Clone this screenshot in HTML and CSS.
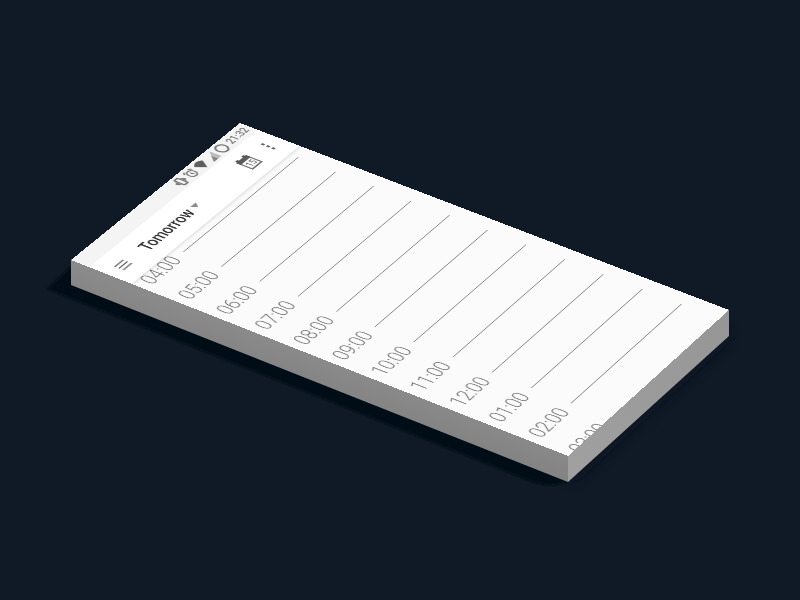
FILE: index.html
```html
<!DOCTYPE html>
<html lang="en">
<head>
<meta charset="utf-8">
<meta name="viewport" content="width=device-width, initial-scale=1">
<title>Day schedule</title>
<link rel="stylesheet" href="styles.css">
</head>
<body>
<div class="device">
  <svg class="slab" viewBox="71 121 658 358" aria-hidden="true">
    <defs>
      <linearGradient id="front" gradientUnits="userSpaceOnUse" x1="310" y1="355" x2="300" y2="382">
        <stop offset="0" stop-color="#8a8a8a"/><stop offset="1" stop-color="#838383"/>
      </linearGradient>
      <linearGradient id="side" gradientUnits="userSpaceOnUse" x1="568" y1="470" x2="729" y2="322">
        <stop offset="0" stop-color="#a0a0a0"/><stop offset="1" stop-color="#969696"/>
      </linearGradient>
      <filter id="soft" x="-10%" y="-10%" width="120%" height="120%"><feGaussianBlur stdDeviation="1"/></filter>
      <filter id="softer" x="-20%" y="-20%" width="140%" height="140%"><feGaussianBlur stdDeviation="6"/></filter>
    </defs>
    <path d="M568 470L729 322V342L572 486Z" fill="#08111c" opacity=".5" filter="url(#softer)"/>
    <path d="M71 266L47 289L535 483Q552 488 568 481Z" fill="#050b14" filter="url(#soft)"/>
    <path d="M71 259L568 455V482L71 285Z" fill="url(#front)"/>
    <path d="M568 455L729 309V336L568 482Z" fill="url(#side)"/>
  </svg>

  <div class="screen">
    <header class="header">
      <div class="status">
        <svg class="status-icon" viewBox="0 0 18 18"><rect x="5.500" y="2" width="7" height="14" rx="1" fill="none" stroke="currentColor" stroke-width="2.400"/><path d="M3 5v8M15 5v8M1 7v4M17 7v4" stroke="currentColor" stroke-width="1.800"/></svg>
        <svg class="status-icon" viewBox="0 0 18 18" fill="none" stroke="currentColor" stroke-width="2"><circle cx="9" cy="10" r="6"/><path d="M9 7v3.500l2.500 1.500M1 5l4-3.500M17 5l-4-3.500"/></svg>
        <svg class="status-icon" viewBox="0 0 18 18"><path d="M0 5Q9-3 18 5L9 17Z" fill="#5e5e5e"/></svg>
        <svg class="status-icon" viewBox="0 0 18 18"><path d="M1 17L17 1V17Z" fill="#bbb"/><path d="M1 17L10 8V17Z" fill="#858585"/></svg>
        <svg class="status-icon" viewBox="0 0 18 18"><circle cx="9" cy="9" r="7.500" fill="none" stroke="currentColor" stroke-width="2.400"/></svg>
        <time class="clock">21:32</time>
      </div>
      <div class="toolbar">
        <button class="icon-button" aria-label="Menu"><svg class="menu-icon" viewBox="0 0 20 20"><path d="M1 4.500H19M1 10H19M1 15.500H19" stroke="currentColor" stroke-width="1.800"/></svg></button>
        <button class="title">Tomorrow<svg class="caret" viewBox="0 0 10 6"><path d="M0 0H10L5 6Z" fill="#888"/></svg></button>
        <button class="icon-button" aria-label="Today"><svg class="calendar-icon" viewBox="0 0 24 24"><path d="M3 4H21V22H3Z" fill="none" stroke="currentColor" stroke-width="2"/><path d="M2 2H22V8H2ZM4 0H8V4H4ZM16 0H20V4H16Z" fill="#5a5a5a"/><text x="12" y="19" text-anchor="middle">15</text></svg></button>
        <button class="icon-button" aria-label="More options"><svg class="more-icon" viewBox="0 0 20 20"><circle cx="10" cy="3" r="2.200"/><circle cx="10" cy="10" r="2.200"/><circle cx="10" cy="17" r="2.200"/></svg></button>
      </div>
    </header>
    <main class="schedule">
      <ol class="hours">
        <li class="hour"><time>04:00</time></li>
        <li class="hour"><time>05:00</time></li>
        <li class="hour"><time>06:00</time></li>
        <li class="hour"><time>07:00</time></li>
        <li class="hour"><time>08:00</time></li>
        <li class="hour"><time>09:00</time></li>
        <li class="hour"><time>10:00</time></li>
        <li class="hour"><time>11:00</time></li>
        <li class="hour"><time>12:00</time></li>
        <li class="hour"><time>01:00</time></li>
        <li class="hour"><time>02:00</time></li>
        <li class="hour"><time>03:00</time></li>
      </ol>
    </main>
  </div>
</div>
</body>
</html>
```
FILE: styles.css
```css
* { box-sizing: border-box; }

body {
  margin: 0;
  min-height: 100vh;
  display: grid;
  place-items: center;
  overflow: hidden;
  background: #0f1a26;
  font-family: Roboto, "Liberation Sans", sans-serif;
}

.device {
  position: relative;
  width: 658px;
  height: 358px;
}

.slab {
  display: block;
  width: 100%;
  height: 100%;
  overflow: visible;
}

/* The flat 360 x 640 phone screen, projected onto the top of the slab. */
.screen {
  position: absolute;
  top: 0;
  left: 0;
  width: 360px;
  height: 640px;
  display: flex;
  flex-direction: column;
  overflow: hidden;
  background: #fbfbfb;
  color: #777;
  transform-origin: 0 0;
  transform: translate(-71px, -121px)
    matrix3d(0.48664, -0.37175, 0, 0.00007161,
             0.75116, 0.28586, 0, -0.00004472,
             0, 0, 1, 0,
             71, 260, 0, 1);
}

.header {
  position: relative;
  flex: none;
  background: #fff;
  box-shadow: 0 1px 5px rgba(0, 0, 0, 0.16);
}

.status {
  display: flex;
  align-items: center;
  justify-content: flex-end;
  gap: 4px;
  height: 24px;
  padding-right: 6px;
  background: #f4f4f4;
}

.status-icon {
  width: 18px;
  height: 18px;
  overflow: visible;
}

.clock {
  margin-left: 2px;
  font-size: 15px;
  font-weight: 500;
}

.toolbar {
  display: flex;
  align-items: center;
  height: 56px;
  padding: 0 2px 0 6px;
}

button {
  border: 0;
  padding: 0;
  background: none;
  color: inherit;
  font: inherit;
}

.icon-button {
  display: grid;
  place-items: center;
  width: 42px;
  height: 42px;
}

.menu-icon,
.more-icon {
  width: 20px;
  height: 20px;
}

.more-icon { fill: #666; }

.calendar-icon {
  width: 26px;
  height: 26px;
  color: #707070;
}

.calendar-icon text {
  fill: currentColor;
  font-size: 12px;
  font-weight: 500;
}

.title {
  display: flex;
  align-items: center;
  gap: 6px;
  margin: 0 auto 0 20px;
  color: #333;
  font-size: 22px;
  font-weight: 500;
}

.caret {
  width: 12px;
  height: 8px;
}

.schedule {
  flex: 1;
  min-height: 0;
}

/* Scrolled slightly, so the first hour starts under the header. */
.hours {
  margin: -14px 0 0;
  padding: 0;
  list-style: none;
}

.hour {
  display: flex;
  align-items: center;
  gap: 16px;
  height: 50px;
  padding: 0 22px 0 12px;
  font-size: 26px;
  font-weight: 300;
}

.hour::after {
  content: "";
  flex: 1;
  border-top: 1px solid #858585;
}
```
